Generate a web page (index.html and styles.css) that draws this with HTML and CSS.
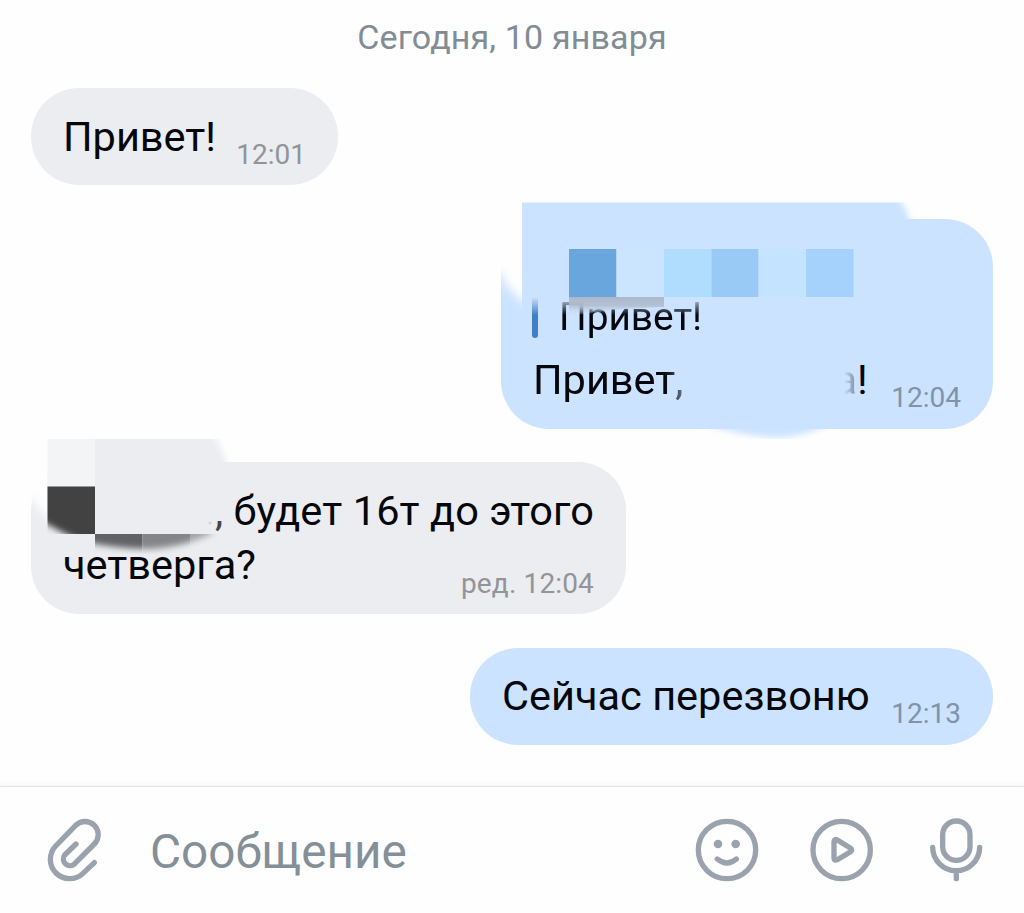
FILE: index.html
```
<!DOCTYPE html>
<html lang="ru">
<head>
    <meta charset="UTF-8">
    <meta name="viewport" content="width=device-width, initial-scale=1.0">
    <title>Сообщения</title>
    <link rel="stylesheet" href="styles.css">
</head>
<body>
    <main class="chat">
        <div class="date">Сегодня, 10 января</div>

        <div class="message in hello">
            <div class="text">Привет!</div>
            <div class="time">12:01</div>
        </div>

        <div class="message out reply">
            <svg class="smudge" width="492" height="210" viewBox="501 219 492 210">
                <defs>
                    <filter id="soft" x="-30%" y="-30%" width="160%" height="160%"><feGaussianBlur stdDeviation="3"/></filter>
                    <filter id="softer" x="-30%" y="-30%" width="160%" height="160%"><feGaussianBlur stdDeviation="5"/></filter>
                    <clipPath id="replyLeft"><rect x="495" y="210" width="27" height="130"/></clipPath>
                    <clipPath id="replyTop"><rect x="522" y="202.500" width="400" height="30"/></clipPath>
                    <clipPath id="replyBottom"><rect x="690" y="428" width="160" height="11"/></clipPath>
                </defs>
                <g clip-path="url(#replyLeft)">
                    <path d="M475 190H545V318Q522 302 513 292Q503 282 500 272L475 258Z" fill="#fefefe" filter="url(#softer)"/>
                </g>
                <g clip-path="url(#replyTop)">
                    <path d="M500 190H894Q905 204 911 224V240H500Z" fill="#cce3ff" filter="url(#soft)"/>
                </g>
                <g clip-path="url(#replyBottom)">
                    <path d="M700 423Q740 436 775 437.500Q806 437 836 421Z" fill="#cce3ff" filter="url(#soft)"/>
                </g>
            </svg>
            <div class="quote">Привет!</div>
            <div class="row">
                <div class="text"><span class="fade-right">Привет,</span><span class="gap"></span><span class="fade-left">а</span>!</div>
                <div class="time">12:04</div>
            </div>
            <svg class="smudge" width="492" height="210" viewBox="501 219 492 210">
                <defs>
                    <linearGradient id="strip" x1="0" y1="0" x2="0" y2="1">
                        <stop offset="0" stop-color="#acb8ca"/>
                        <stop offset=".45" stop-color="#b1bdcf" stop-opacity=".9"/>
                        <stop offset="1" stop-color="#cce3ff" stop-opacity="0"/>
                    </linearGradient>
                </defs>
                <rect x="569" y="249" width="47.500" height="48" fill="#69a6dd"/>
                <rect x="616.500" y="249" width="47.500" height="48" fill="#cbe4ff"/>
                <rect x="664" y="249" width="47.500" height="48" fill="#b0dcfe"/>
                <rect x="711.500" y="249" width="47" height="48" fill="#99c9f5"/>
                <rect x="758.500" y="249" width="47.500" height="48" fill="#c3e3ff"/>
                <rect x="806" y="249" width="47.500" height="48" fill="#a5d1fd"/>
                <path d="M569 297H664V307Q615 308 569 316Z" fill="url(#strip)"/>
            </svg>
        </div>

        <div class="message in question">
            <svg class="smudge" width="595" height="152" viewBox="31 462 595 152">
                <defs>
                    <clipPath id="askLeft"><rect x="25" y="450" width="22.500" height="90"/></clipPath>
                    <clipPath id="askTop"><rect x="95" y="439" width="150" height="95"/></clipPath>
                    <clipPath id="askDark"><rect x="47.500" y="486.500" width="47.500" height="47.500"/></clipPath>
                    <clipPath id="askStrip"><rect x="95" y="534" width="125" height="25"/></clipPath>
                    <mask id="stripMask" maskUnits="userSpaceOnUse" x="85" y="520" width="150" height="50">
                        <path d="M80 520V541Q115 549 150 549Q185 547 212 533V520Z" fill="#fff" filter="url(#soft)"/>
                    </mask>
                </defs>
                <g clip-path="url(#askLeft)">
                    <path d="M10 430H70V534Q42 518 31 497L10 485Z" fill="#fefefe" filter="url(#softer)"/>
                </g>
                <g clip-path="url(#askTop)">
                    <path d="M80 430H210Q220 441 227 465V550H80Z" fill="#ebedf1" filter="url(#soft)"/>
                </g>
                <rect x="47.500" y="439" width="47.500" height="47.500" fill="#f2f4f6"/>
                <g clip-path="url(#askDark)">
                    <rect x="47" y="486" width="48" height="48" fill="#ebedf1"/>
                    <path d="M30 470H110V552Q66 537 30 514Z" fill="#434343" filter="url(#soft)"/>
                </g>
                <g clip-path="url(#askStrip)">
                    <g mask="url(#stripMask)">
                        <rect x="95" y="534" width="47.500" height="20" fill="#626264"/>
                        <rect x="142.500" y="534" width="47.500" height="20" fill="#858587"/>
                        <rect x="190" y="534" width="30" height="20" fill="#a3a3a6"/>
                    </g>
                </g>
                <circle cx="210" cy="523" r="1.500" fill="#d3d5d9"/>
            </svg>
            <div class="text"><span class="name"></span><span class="comma">,</span><span class="rest"> будет 16т до этого</span><br>четверга?</div>
            <div class="time">ред. 12:04</div>
        </div>

        <div class="message out call">
            <div class="text">Сейчас перезвоню</div>
            <div class="time">12:13</div>
        </div>
    </main>

    <footer class="composer">
        <svg class="icon clip" width="56" height="64" viewBox="48 112 168 192">
            <path d="M193 246L159 278A58 58 0 0 1 77 196L137 134A39 39 0 0 1 193 190L132 251A20 20 0 0 1 104 223L138 190"/>
        </svg>
        <div class="placeholder">Сообщение</div>
        <svg class="icon smile" width="64" height="64" viewBox="45 53 192 192">
            <circle cx="141" cy="149" r="86"/>
            <circle class="dot" cx="114" cy="131" r="13"/>
            <circle class="dot" cx="167" cy="131" r="13"/>
            <path d="M112 176Q141 200 169 176"/>
        </svg>
        <svg class="icon play" width="64" height="64" viewBox="390 53 192 192">
            <circle cx="485" cy="149" r="86"/>
            <path d="M462 124C462 117 466 116 472 119L512 144Q518 149 512 154L472 178C466 181 462 180 462 173Z"/>
        </svg>
        <svg class="icon mic" width="56" height="66" viewBox="54 50 168 198">
            <rect x="98" y="62" width="82" height="118" rx="41"/>
            <path d="M68 141A70.500 70 0 0 0 209 141M139 211V235"/>
        </svg>
    </footer>
</body>
</html>
```
FILE: styles.css
```
* {
    box-sizing: border-box;
}
body {
    margin: 0;
    height: 913px;
    display: flex;
    flex-direction: column;
    background-color: #fefefe;
    color: #05070c;
    font-family: Roboto, sans-serif;
    overflow: hidden;
}
.chat {
    flex: 1;
    display: flex;
    flex-direction: column;
    align-items: flex-start;
    padding: 16px 31px 0;
}
.date {
    align-self: center;
    height: 40px;
    line-height: 42px;
    font-size: 34px;
    letter-spacing: 0.15px;
    color: #828c94;
}
.message {
    position: relative;
    display: flex;
    justify-content: space-between;
    align-items: flex-end;
    padding: 21px 32px 22px;
    border-radius: 48px;
    white-space: nowrap;
}
.in {
    background-color: #ebedf1;
}
.out {
    align-self: flex-end;
    background-color: #cce3ff;
}
.text {
    position: relative;
    font-size: 41.5px;
    line-height: 54px;
}
.time {
    position: relative;
    font-size: 28px;
    line-height: 34px;
    margin-bottom: -9px;
    color: #929497;
}
.out .time {
    margin-bottom: -8px;
    color: #8093aa;
}
.hello {
    width: 307px;
    margin-top: 32px;
}
.hello .text {
    padding-top: 1px;
    margin-bottom: -1px;
}
.reply {
    width: 492px;
    height: 210px;
    margin-top: 34px;
    flex-direction: column;
    justify-content: flex-end;
    align-items: stretch;
}
.row {
    display: flex;
    justify-content: space-between;
    align-items: flex-end;
}
.quote {
    position: relative;
    align-self: flex-start;
    margin-left: -1px;
    padding-left: 27px;
    margin-bottom: 14px;
    font-size: 38.8px;
    line-height: 44px;
    -webkit-mask-image: linear-gradient(transparent 2px, #000 20px);
    mask-image: linear-gradient(transparent 2px, #000 20px);
}
.quote::before {
    content: "";
    position: absolute;
    left: 0;
    top: 0;
    bottom: 1px;
    width: 6px;
    border-radius: 3px;
    background-color: #3f81c4;
}
.fade-right {
    background: linear-gradient(90deg, #05070c 132px, #6f7f95 152px);
    -webkit-background-clip: text;
    background-clip: text;
    color: transparent;
}
.fade-left {
    background: linear-gradient(90deg, #cce3ff 9px, #6c7b93 23px);
    -webkit-background-clip: text;
    background-clip: text;
    color: transparent;
}
.gap {
    display: inline-block;
    width: 151px;
}
.question {
    width: 595px;
    height: 152px;
    margin-top: 33px;
}
.question .text {
    width: 0;
}
.name {
    display: inline-block;
    width: 152px;
}
.comma {
    color: #44464b;
}
.rest {
    letter-spacing: 0.1px;
}
.question .time {
    letter-spacing: 0.15px;
}
.call {
    width: 523px;
    margin-top: 34px;
}
.smudge {
    position: absolute;
    left: 0;
    top: 0;
    overflow: visible;
}
.composer {
    display: flex;
    align-items: center;
    height: 127px;
    padding: 0 40px 0 46px;
    border-top: 1px solid #e1e3e5;
    box-shadow: 0 -1px 6px rgba(0, 0, 0, 0.04);
}
.placeholder {
    flex: 1;
    margin-left: 48px;
    padding-top: 3px;
    font-size: 47.7px;
    line-height: 56px;
    color: #858f97;
}
.icon {
    fill: none;
    stroke: #9aa3ad;
    stroke-width: 16;
    stroke-linecap: round;
    stroke-linejoin: round;
}
.icon .dot {
    fill: #9aa3ad;
    stroke: none;
}
.play {
    margin-left: 51px;
}
.mic {
    margin-left: 54px;
}
```
